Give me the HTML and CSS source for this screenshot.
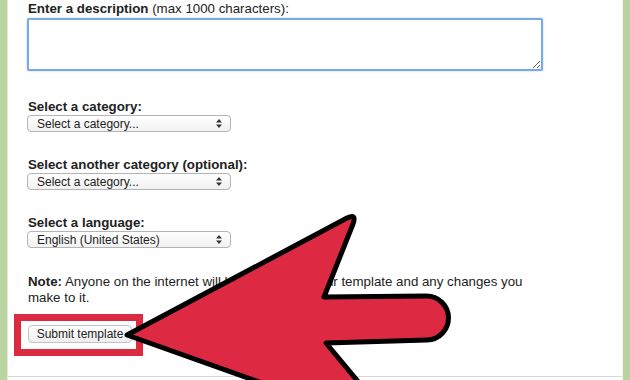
FILE: index.html
```html
<!DOCTYPE html>
<html lang="en">
  <head>
    <meta charset="UTF-8" />
    <meta name="viewport" content="width=device-width, initial-scale=1.0" />
    <title>Submit template</title>
    <link rel="stylesheet" href="styles.css">
  </head>
  <body>
    <div class="page">
      <div class="side side-left"></div>

      <main class="content">
        <form class="template-form" onsubmit="return false">
          <label class="field-label" for="desc"><b>Enter a description</b> (max 1000 characters):</label>
          <textarea id="desc" class="desc"></textarea>

          <div class="field">
            <label class="field-label" for="cat1"><b>Select a category:</b></label>
            <div class="select">
              <select id="cat1"><option>Select a category...</option></select>
              <svg class="select-arrows" width="6" height="9" viewBox="0 0 6 9"><path d="M3 0 L6 3.5 H0 Z M3 9 L6 5.5 H0 Z" fill="#333"/></svg>
            </div>
          </div>

          <div class="field">
            <label class="field-label" for="cat2"><b>Select another category (optional):</b></label>
            <div class="select">
              <select id="cat2"><option>Select a category...</option></select>
              <svg class="select-arrows" width="6" height="9" viewBox="0 0 6 9"><path d="M3 0 L6 3.5 H0 Z M3 9 L6 5.5 H0 Z" fill="#333"/></svg>
            </div>
          </div>

          <div class="field">
            <label class="field-label" for="lang"><b>Select a language:</b></label>
            <div class="select">
              <select id="lang"><option>English (United States)</option></select>
              <svg class="select-arrows" width="6" height="9" viewBox="0 0 6 9"><path d="M3 0 L6 3.5 H0 Z M3 9 L6 5.5 H0 Z" fill="#333"/></svg>
            </div>
          </div>

          <p class="note"><b>Note:</b> Anyone on the internet will be able to see your template and any changes you make to it.</p>

          <div class="highlight">
            <button class="submit">Submit template</button>
          </div>
        </form>
      </main>

      <div class="side side-right"></div>
    </div>

    <!-- big red pointer over the page -->
    <svg class="pointer" width="630" height="380" viewBox="0 0 630 380">
      <path d="M127 335 L347 218 Q357 213 353 224 L324 297 L426 296 A22 22 0 0 1 427 340 L326 343 L400 432 Z"
            fill="#dd2a42" stroke="#000" stroke-width="5" stroke-linejoin="round"/>
    </svg>
  </body>
</html>
```

FILE: styles.css
```css
body {
  margin: 0;
  padding: 0;
  background-color: #fff;
  color: #222;
  font-family: "Liberation Sans", Arial, sans-serif;
  overflow: hidden;
}
.page {
  display: flex;
  width: 630px;
  height: 380px;
}
.side {
  width: 7px;
  background-color: #b9d4a1;
}
.side-left {
  border-right: 1px solid #e3ead8;
}
.side-right {
  border-left: 1px solid #f4f4e2;
}
.content {
  flex: 1;
  height: 377px;
  border-bottom: 1px solid #d8d8d8;
  padding-left: 20px;
  box-sizing: border-box;
}
.template-form {
  display: flex;
  flex-direction: column;
  align-items: flex-start;
}
.field-label {
  display: block;
  font-size: 13.3px;
  line-height: 15px;
  margin-top: 1px;
}
.desc {
  width: 516px;
  height: 53px;
  margin: 2px 0 0 -1px;
  box-sizing: border-box;
  border: 2px solid #79a9e6;
  border-radius: 2px;
  box-shadow: 0 0 2px #a6c7f0;
  outline: none;
  resize: both;
}
.field {
  display: flex;
  flex-direction: column;
  align-items: flex-start;
  margin-top: 28px;
}
.field + .field {
  margin-top: 25px;
}
.field .field-label {
  margin-top: 0;
}
.select {
  position: relative;
  margin: 1px 0 0 -1px;
}
.select select {
  -webkit-appearance: none;
  appearance: none;
  display: block;
  width: 204px;
  height: 17px;
  padding: 0 0 0 9px;
  border: 1px solid #b4b4b4;
  border-radius: 4px;
  background: linear-gradient(#ffffff, #f1f1f1);
  font-family: "Liberation Sans", Arial, sans-serif;
  font-size: 12px;
  color: #222;
}
.select-arrows {
  position: absolute;
  right: 9px;
  top: 4px;
}
.note {
  width: 505px;
  margin: 26px 0 0;
  font-size: 13.3px;
  line-height: 16px;
}
.highlight {
  margin: 8px 0 0 -14px;
  padding: 4px 4px 6px 7px;
  border: 7px solid #dc2a40;
  background-color: #fff;
}
.submit {
  display: block;
  height: 18px;
  width: 104px;
  padding: 0;
  border: 1px solid #c4c4c4;
  border-radius: 4px;
  background: linear-gradient(#ffffff, #eeeeee);
  font-family: "Liberation Sans", Arial, sans-serif;
  font-size: 12px;
  color: #222;
}
.pointer {
  position: absolute;
  top: 0;
  left: 0;
  pointer-events: none;
}
```
